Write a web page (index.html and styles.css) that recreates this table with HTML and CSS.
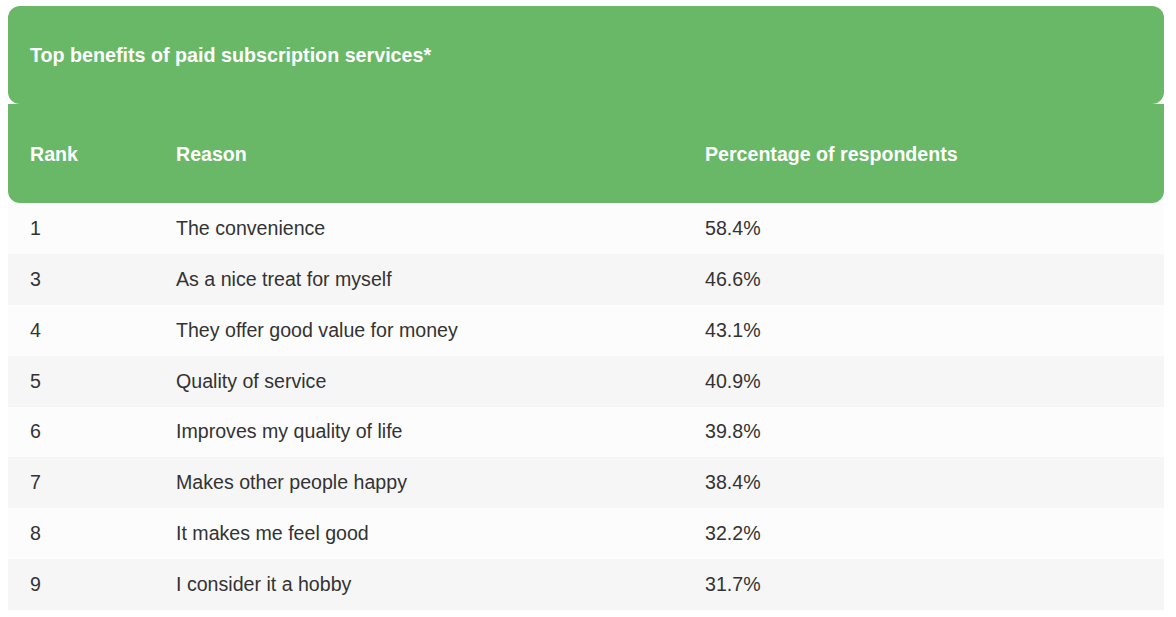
FILE: index.html
```html
<!DOCTYPE html>
<html lang="en">
<head>
<meta charset="utf-8">
<title>Top benefits of paid subscription services</title>
<link rel="stylesheet" href="styles.css">
</head>
<body>
<div class="wrap">
  <div class="caption">Top benefits of paid subscription services*</div>
  <table class="tbl">
    <thead>
      <tr><th class="c-rank">Rank</th><th class="c-reason">Reason</th><th class="c-pct">Percentage of respondents</th></tr>
    </thead>
    <tbody>
      <tr><td>1</td><td>The convenience</td><td>58.4%</td></tr>
      <tr><td>3</td><td>As a nice treat for myself</td><td>46.6%</td></tr>
      <tr><td>4</td><td>They offer good value for money</td><td>43.1%</td></tr>
      <tr><td>5</td><td>Quality of service</td><td>40.9%</td></tr>
      <tr><td>6</td><td>Improves my quality of life</td><td>39.8%</td></tr>
      <tr><td>7</td><td>Makes other people happy</td><td>38.4%</td></tr>
      <tr><td>8</td><td>It makes me feel good</td><td>32.2%</td></tr>
      <tr><td>9</td><td>I consider it a hobby</td><td>31.7%</td></tr>
    </tbody>
  </table>
</div>
</body>
</html>
```
FILE: styles.css
```css
html, body {
  margin: 0;
  padding: 0;
  background: #ffffff;
}
body {
  font-family: "Liberation Sans", Arial, sans-serif;
  color: #333333;
}
.wrap {
  padding: 6px 12px 0 8px;
}
.caption {
  background: #68b868;
  color: #ffffff;
  font-weight: bold;
  font-size: 19.7px;
  height: 98px;
  box-sizing: border-box;
  display: flex;
  align-items: center;
  padding-left: 22px;
  border-radius: 12px;
}
.tbl {
  width: 100%;
  border-collapse: separate;
  border-spacing: 0;
  font-size: 19.6px;
}
.tbl th {
  background: #68b868;
  color: #ffffff;
  font-weight: bold;
  text-align: left;
  height: 99px;
  padding: 1px 0 0 22px;
  box-sizing: border-box;
  vertical-align: middle;
}
.tbl th.c-rank { width: 146px; border-bottom-left-radius: 12px; }
.tbl th.c-reason { width: 529px; }
.tbl th.c-pct { border-bottom-right-radius: 12px; }
.tbl td {
  height: 50.875px;
  padding: 0 0 0 22px;
  box-sizing: border-box;
  vertical-align: middle;
  color: #333333;
}
.tbl tbody tr:nth-child(odd) td { background: #fcfcfc; }
.tbl tbody tr:nth-child(even) td { background: #f6f6f6; }
```
